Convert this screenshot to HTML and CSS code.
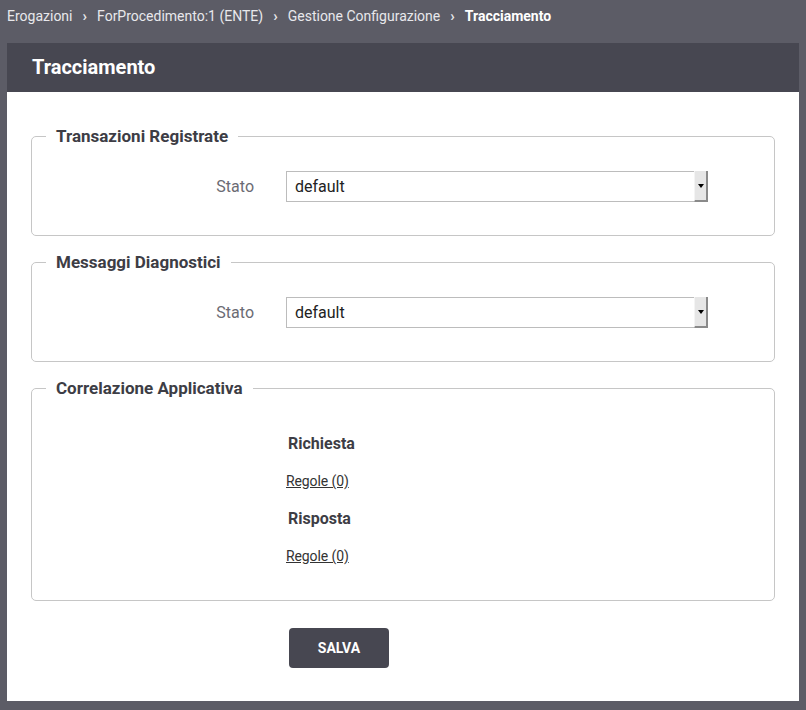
FILE: index.html
```html
<!DOCTYPE html>
<html lang="it">
<head>
<meta charset="utf-8">
<title>Tracciamento</title>
<link rel="stylesheet" href="styles.css">
</head>
<body>
<nav class="crumbs">
  <span class="crumb">Erogazioni</span>
  <span class="sep">&#x203A;</span>
  <span class="crumb">ForProcedimento:1 (ENTE)</span>
  <span class="sep">&#x203A;</span>
  <span class="crumb">Gestione Configurazione</span>
  <span class="sep">&#x203A;</span>
  <span class="crumb current">Tracciamento</span>
</nav>
<main class="panel">
  <header class="panel-head">Tracciamento</header>
  <div class="panel-body">
    <fieldset class="group">
      <legend>Transazioni Registrate</legend>
      <div class="row">
        <label class="lbl">Stato</label>
        <div class="select"><span class="val">default</span><span class="btn"><span class="tri"></span></span></div>
      </div>
    </fieldset>
    <fieldset class="group">
      <legend>Messaggi Diagnostici</legend>
      <div class="row">
        <label class="lbl">Stato</label>
        <div class="select"><span class="val">default</span><span class="btn"><span class="tri"></span></span></div>
      </div>
    </fieldset>
    <fieldset class="group corr">
      <legend>Correlazione Applicativa</legend>
      <div class="sub">
        <h4>Richiesta</h4>
        <a class="link" href="#">Regole (0)</a>
        <h4>Risposta</h4>
        <a class="link" href="#">Regole (0)</a>
      </div>
    </fieldset>
    <div class="actions">
      <button class="save" type="button">SALVA</button>
    </div>
  </div>
</main>
</body>
</html>
```
FILE: styles.css
```css
html, body {
  margin: 0;
  padding: 0;
}
body {
  background: #5c5c66;
  font-family: Roboto, "Liberation Sans", sans-serif;
  width: 806px;
  height: 710px;
  overflow: hidden;
}
.crumbs {
  height: 43px;
  box-sizing: border-box;
  padding: 6px 0 0 7px;
  display: flex;
  align-items: flex-start;
  color: #e8e8ec;
  font-size: 14px;
  line-height: 20px;
}
.crumb.current {
  font-weight: 700;
  color: #ffffff;
}
.sep {
  font-weight: 700;
  margin: 0 10px 0 10px;
  font-size: 15px;
}
.panel {
  margin-left: 7px;
  width: 792px;
  height: 658px;
  background: #ffffff;
}
.panel-head {
  height: 49px;
  background: #474751;
  color: #ffffff;
  font-size: 20px;
  font-weight: 700;
  line-height: 49px;
  padding-left: 25px;
}
.panel-body {
  padding: 34px 24px 0 24px;
}
.group {
  margin: 0 0 16px 0;
  padding: 0 14px;
  border: 1px solid #c6c6c6;
  border-radius: 5px;
  min-width: 0;
}
.group legend {
  padding: 0 10px;
  margin-left: 0;
  font-size: 17px;
  font-weight: 700;
  color: #3d3d45;
  line-height: 20px;
}
.row {
  display: flex;
  align-items: center;
  padding: 25px 0 33px 0;
}
.lbl {
  width: 208px;
  text-align: right;
  font-size: 16px;
  color: #6b6b73;
  margin-right: 32px;
}
.select {
  width: 422px;
  height: 31px;
  box-sizing: border-box;
  border: 1px solid #bcbcbc;
  display: flex;
  align-items: stretch;
  background: #fff;
}
.val {
  flex: 1;
  padding-left: 8px;
  font-size: 16px;
  line-height: 29px;
  color: #222;
}
.btn {
  width: 11px;
  background: #e6e6e6;
  border-left: 1px solid #f4f4f4;
  border-right: 2px solid #8a8a8a;
  border-bottom: 2px solid #8a8a8a;
  display: flex;
  align-items: center;
  justify-content: center;
  margin: -1px -1px -1px 0;
}
.tri {
  width: 0;
  height: 0;
  border-left: 3px solid transparent;
  border-right: 3px solid transparent;
  border-top: 4px solid #000;
}
.corr .sub {
  padding: 36px 0 16px 240px;
  display: flex;
  flex-direction: column;
  align-items: flex-start;
}
.sub h4 {
  margin: 0 0 0 2px;
  font-size: 16px;
  font-weight: 700;
  color: #3d3d45;
  line-height: 20px;
}
.link {
  font-size: 14px;
  color: #333;
  text-decoration: underline;
  line-height: 20px;
  margin: 17px 0 18px 0;
  letter-spacing: -0.1px;
}
.actions {
  padding: 11px 0 0 258px;
}
.save {
  width: 100px;
  height: 40px;
  border: 0;
  border-radius: 4px;
  background: #474751;
  color: #fff;
  font-family: Roboto, "Liberation Sans", sans-serif;
  font-size: 14px;
  font-weight: 700;
}
```
